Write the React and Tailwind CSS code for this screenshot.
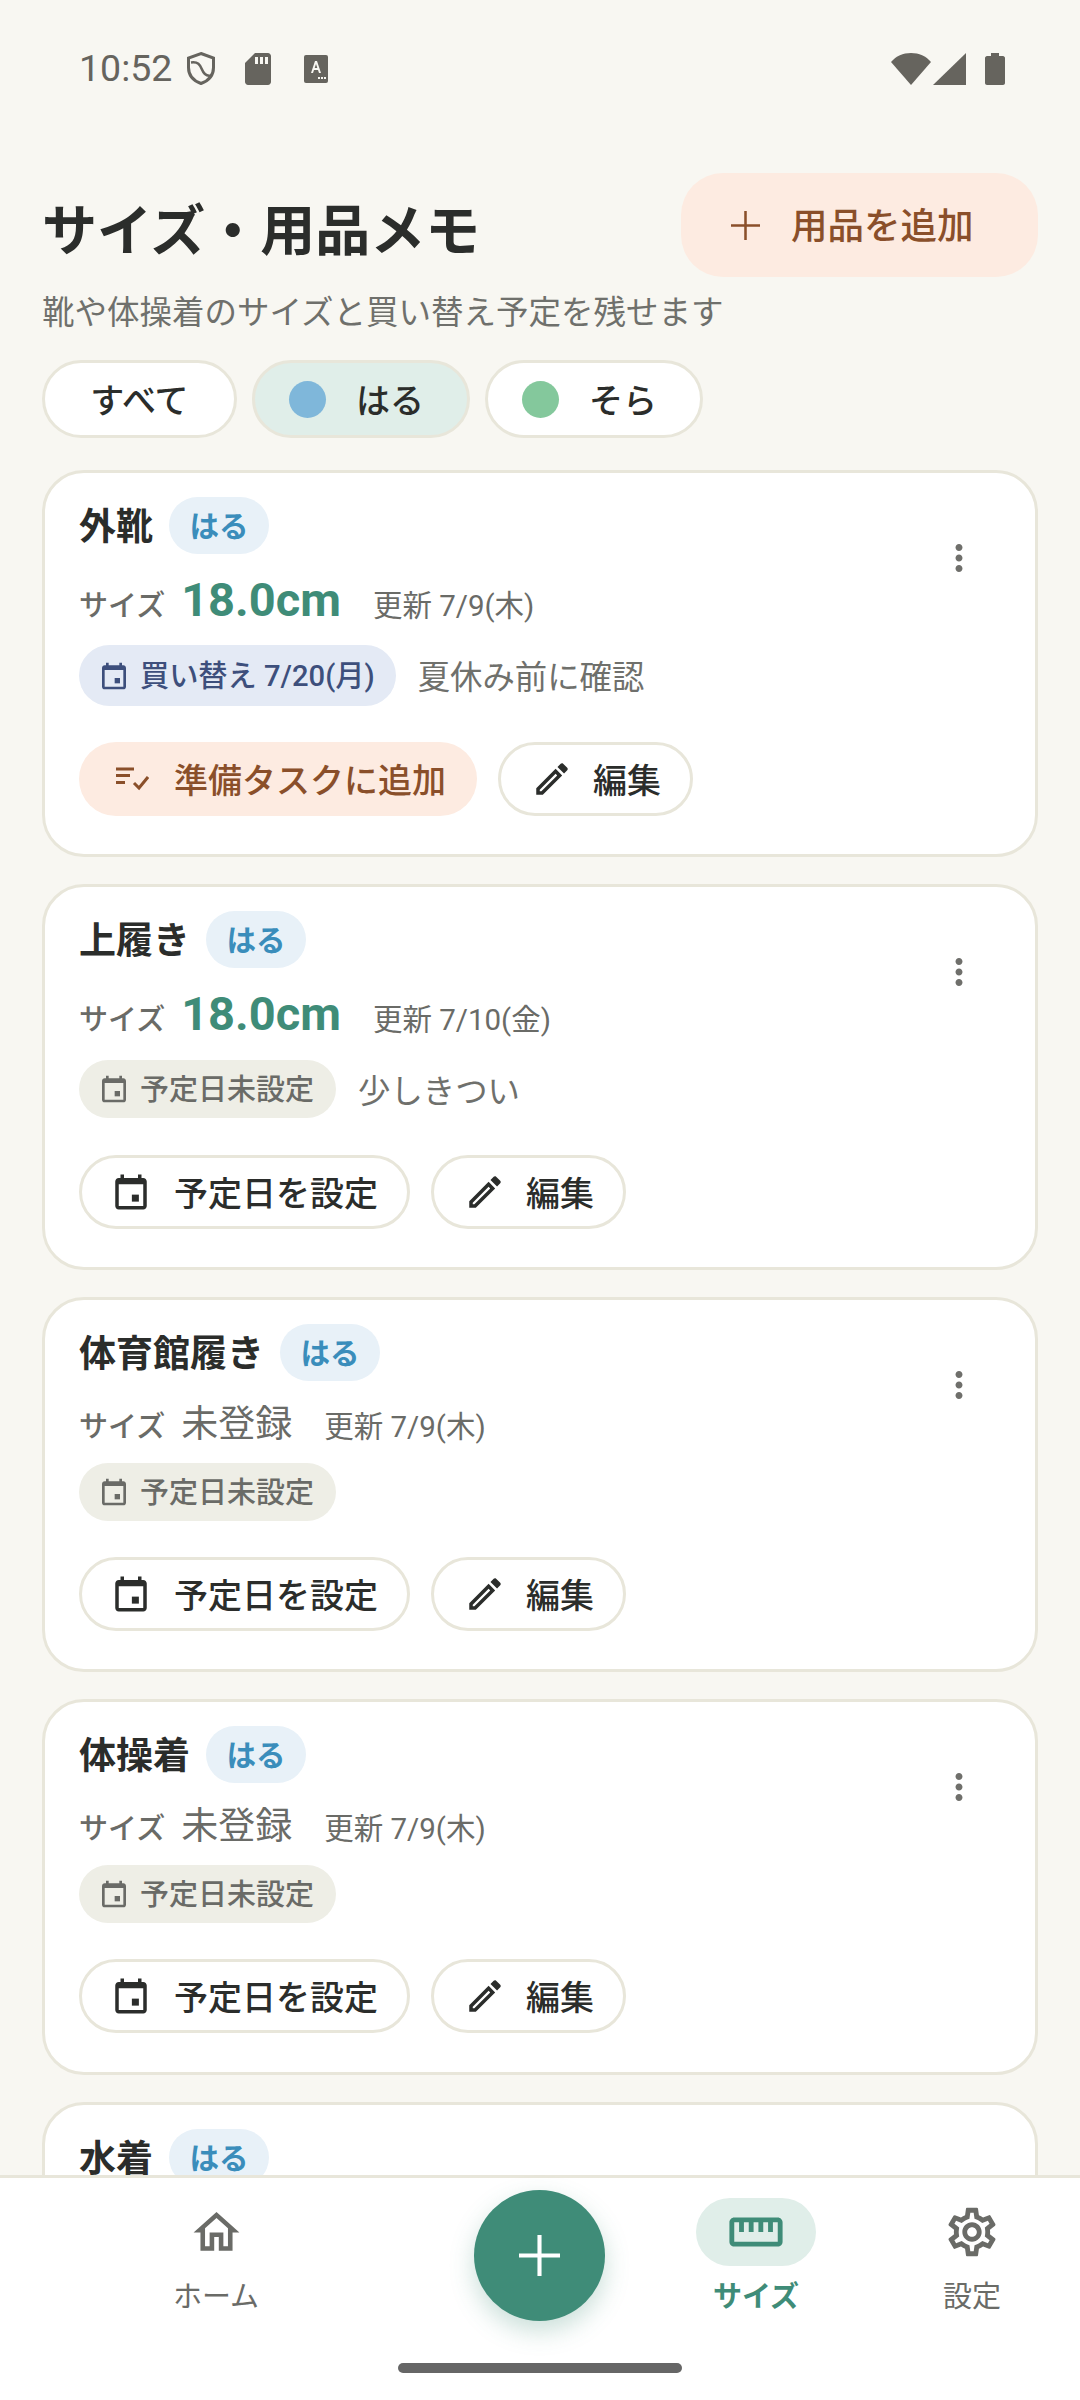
import {
  MdMoreVert,
  MdOutlineEdit,
  MdOutlineHome,
  MdOutlineSettings,
  MdOutlineStraighten,
} from 'react-icons/md';

const CARDS = [
  { name: '外靴', size: '18.0cm', updated: '更新 7/9(木)', plan: '買い替え 7/20(月)', note: '夏休み前に確認', h: 'h-[387px]' },
  { name: '上履き', size: '18.0cm', updated: '更新 7/10(金)', note: '少しきつい', h: 'h-[386px]' },
  { name: '体育館履き', updated: '更新 7/9(木)', h: 'h-[375px]' },
  { name: '体操着', updated: '更新 7/9(木)', h: 'h-[376px]' },
  { name: '水着', updated: '更新 7/9(木)', h: 'h-[376px]' },
];

function PlusIcon({ size, stroke }) {
  return (
    <svg viewBox="0 0 40 40" style={{ width: size, height: size }} fill="none" stroke="currentColor" strokeWidth={stroke}>
      <path d="M20 0V40M0 20H40" />
    </svg>
  );
}

function CalendarIcon({ className }) {
  return (
    <svg viewBox="0 -1 24 24" className={className} fill="currentColor">
      <path d="M16 1v2H8V1H6v2H5c-1.110 0-2 .9-2 2v14c0 1.100.89 2 2 2h14c1.100 0 2-.9 2-2V5c0-1.100-.9-2-2-2h-1V1h-2zm3 18H5V6.500h14V19z" />
      <rect x="12.500" y="12.500" width="4" height="4" />
    </svg>
  );
}

function StatusBar() {
  return (
    <div className="h-[135px] flex items-center justify-between pl-[79px] pr-[75px] text-[#66645e] pt-[2px]">
      <div className="flex items-center">
        <span className="text-[37.500px] leading-none font-['Roboto']">10:52</span>
        <svg viewBox="0 0 30 34" className="w-[30px] h-[35px] ml-[14px]" fill="none" stroke="currentColor" strokeWidth="3">
          <path d="M15 2 27.500 6.500V16C27.500 24 22 29.500 15 32 8 29.500 2.500 24 2.500 16V6.500Z" />
          <path d="M5 11C12 10 14 13 16 18 18 23 21 25 25 24" strokeWidth="2.500" />
        </svg>
        <svg viewBox="0 0 26 32" className="w-[26px] h-[32px] ml-[29px]" fill="currentColor">
          <path d="M10 0H23C24.500 0 26 1.500 26 3V29C26 30.500 24.500 32 23 32H3C1.500 32 0 30.500 0 29V10Z" />
          <path d="M10 4H13V11H10ZM15 4H18V11H15ZM20 4H23V11H20Z" fill="#f8f7f2" />
        </svg>
        <svg viewBox="0 0 24 28" className="w-[24px] h-[28px] ml-[33px]" fill="currentColor">
          <rect width="24" height="28" rx="2" />
          <path d="M7 18 11 6H13L17 18H15L14 15H10L9 18ZM10.700 13H13.300L12 9Z" fill="#f8f7f2" />
          <path d="M14 22H16V24H14ZM17 22H19V24H17ZM20 22H22V24H20Z" fill="#f8f7f2" />
        </svg>
      </div>
      <div className="flex items-center">
        <svg viewBox="0 0 40 32" className="w-[40px] h-[32px]" fill="currentColor">
          <path d="M0 9C5 3 12 0 20 0 28 0 35 3 40 9L20 32Z" />
        </svg>
        <svg viewBox="0 0 33 32" className="w-[33px] h-[32px] ml-[2px]" fill="currentColor">
          <path d="M33 0V32H0Z" />
        </svg>
        <svg viewBox="0 0 20 32" className="w-[20px] h-[32px] ml-[19px]" fill="currentColor">
          <path d="M6 0H14V3H18C19 3 20 4 20 5V30C20 31 19 32 18 32H2C1 32 0 31 0 30V5C0 4 1 3 2 3H6Z" />
        </svg>
      </div>
    </div>
  );
}

function Filters() {
  return (
    <div className="flex gap-[15px] mt-[27px] text-[34px] font-medium text-[#2b2d2b]">
      <div className="w-[195px] h-[78px] rounded-full border-[3px] border-[#e8e6da] bg-white flex items-center justify-center pt-[4px]">すべて</div>
      <div className="w-[218px] h-[78px] rounded-full border-[3px] border-[#e8e6da] bg-[#e0eee9] flex items-center pl-[34px] gap-[30px]">
        <span className="w-[37px] h-[37px] rounded-full bg-[#7fb7da]" />
        <span className="pt-[4px]">はる</span>
      </div>
      <div className="w-[218px] h-[78px] rounded-full border-[3px] border-[#e8e6da] bg-white flex items-center pl-[34px] gap-[30px]">
        <span className="w-[37px] h-[37px] rounded-full bg-[#84c89c]" />
        <span className="pt-[4px]">そら</span>
      </div>
    </div>
  );
}

function ActionButton({ icon: Icon, children, className }) {
  return (
    <div className={`h-[74px] rounded-full border-[3px] border-[#e8e6da] bg-white flex items-center text-[34px] font-medium text-[#2b2d2b] ${className}`}>
      <Icon className="w-[42px] h-[42px]" />
      <span className="pt-[4px]">{children}</span>
    </div>
  );
}

function ItemCard({ card }) {
  return (
    <div className={`${card.h} shrink-0 rounded-[42px] border-[3px] border-[#e8e6da] bg-white pl-[34px] pt-[24px] relative`}>
      <div className="flex items-center h-[57px]">
        <span className="text-[37px] leading-none font-bold text-[#2b2d2b] pt-[4px]">{card.name}</span>
        <span className="ml-[16px] w-[100px] h-[57px] rounded-full bg-[#e8f1f8] flex items-center justify-center text-[29.500px] font-semibold text-[#3a8dbb] pt-[3px]">はる</span>
      </div>
      <MdMoreVert className="absolute right-[55px] top-[64px] w-[42px] h-[42px] text-[#6f6f6b]" />
      <div className={`flex items-baseline h-[54px] ${card.size ? 'mt-[22px]' : 'mt-[24px]'}`}>
        <span className="text-[29px] font-medium text-[#6a6b67]">サイズ</span>
        {card.size ? (
          <span className="ml-[16px] text-[47px] leading-none font-bold text-[#3f8c78] font-['Roboto']">{card.size}</span>
        ) : (
          <span className="ml-[16px] text-[37px] leading-none text-[#6a6b67]">未登録</span>
        )}
        <span className="ml-[32px] text-[29.500px] text-[#6a6b67]">{card.updated}</span>
      </div>
      <div className={`flex items-center ${card.plan ? 'mt-[15px]' : card.note ? 'mt-[16px]' : 'mt-[4px]'}`}>
        {card.plan ? (
          <span className="h-[61px] pl-[19px] pr-[21px] rounded-full bg-[#e4eaf5] flex items-center gap-[10px] text-[29.200px] font-medium text-[#3d4f7c]">
            <CalendarIcon className="w-[32px] h-[32px]" />
            <span className="pt-[3px]">{card.plan}</span>
          </span>
        ) : (
          <span className="h-[58px] pl-[19px] pr-[22px] rounded-full bg-[#eeeee6] flex items-center gap-[10px] text-[29px] font-medium text-[#6a6b67]">
            <CalendarIcon className="w-[32px] h-[32px]" />
            <span className="pt-[3px]">予定日未設定</span>
          </span>
        )}
        {card.note && <span className="ml-[22px] text-[32.400px] text-[#6f706c] pt-[6px]">{card.note}</span>}
      </div>
      <div className={`flex gap-[21px] ${card.plan ? 'mt-[36px]' : card.note ? 'mt-[37px]' : 'mt-[36px]'}`}>
        {card.plan ? (
          <div className="h-[74px] w-[398px] rounded-full bg-[#fdebe1] flex items-center pl-[36px] gap-[25px] text-[34px] font-medium text-[#8a4f2a]">
            <svg viewBox="0 0 34 24" className="w-[34px] h-[24px]" fill="none" stroke="currentColor" strokeWidth="3">
              <path d="M1 2H19M1 8.500H15M1 15.500H10M19 16 24 21 33 10" />
            </svg>
            <span className="pt-[4px]">準備タスクに追加</span>
          </div>
        ) : (
          <ActionButton icon={CalendarIcon} className="w-[331px] pl-[28px] gap-[22px]">予定日を設定</ActionButton>
        )}
        <ActionButton icon={MdOutlineEdit} className="w-[195px] pl-[30px] gap-[20px]">編集</ActionButton>
      </div>
    </div>
  );
}

function BottomNav() {
  return (
    <div className="h-[225px] shrink-0 border-t-[3px] border-[#e8e6da] bg-white relative">
      <div className="flex pt-[20px]">
        <div className="w-[432px] flex flex-col items-center text-[#6a6b67]">
          <div className="h-[68px] flex items-center"><MdOutlineHome className="w-[55px] h-[55px]" /></div>
          <span className="text-[29px] mt-[10px]">ホーム</span>
        </div>
        <div className="w-[216px]" />
        <div className="w-[216px] flex flex-col items-center text-[#3f8c78]">
          <div className="w-[120px] h-[68px] rounded-full bg-[#e0eee9] flex items-center justify-center"><MdOutlineStraighten className="w-[58px] h-[58px]" /></div>
          <span className="text-[29px] mt-[10px] font-bold">サイズ</span>
        </div>
        <div className="w-[216px] flex flex-col items-center text-[#6a6b67]">
          <div className="h-[68px] flex items-center"><MdOutlineSettings className="w-[58px] h-[58px]" /></div>
          <span className="text-[29px] mt-[10px]">設定</span>
        </div>
      </div>
      <div className="absolute left-[474px] top-[12px] w-[131px] h-[131px] rounded-full bg-[#3f8c78] shadow-[0_10px_24px_rgba(63,140,120,0.28)] flex items-center justify-center text-white">
        <PlusIcon size={41} stroke={4} />
      </div>
      <div className="absolute left-[398px] top-[185px] w-[284px] h-[10px] rounded-full bg-[#666666]" />
    </div>
  );
}

export default function App() {
  return (
    <div className="w-[1080px] h-[2400px] bg-[#f8f7f2] flex flex-col overflow-hidden font-['Roboto','Noto_Sans_CJK_JP',sans-serif]">
      <StatusBar />
      <div className="flex-1 min-h-0 overflow-hidden px-[42px]">
        <div className="flex items-center justify-between mt-[38px]">
          <h1 className="text-[55px] leading-none font-bold text-[#2b2d2b] pt-[12px]">サイズ・用品メモ</h1>
          <div className="w-[357px] h-[104px] rounded-[42px] bg-[#fdebe1] flex items-center pl-[50px] gap-[31px] text-[36.500px] font-medium text-[#8a4f2a]">
            <PlusIcon size={29} stroke={3.5} />
            <span className="pt-[4px]">用品を追加</span>
          </div>
        </div>
        <p className="mt-[16px] text-[32.500px] leading-[40px] text-[#6f706c]">靴や体操着のサイズと買い替え予定を残せます</p>
        <Filters />
        <div className="flex flex-col gap-[27px] mt-[32px]">
          {CARDS.map((card) => (
            <ItemCard key={card.name} card={card} />
          ))}
        </div>
      </div>
      <BottomNav />
    </div>
  );
}
